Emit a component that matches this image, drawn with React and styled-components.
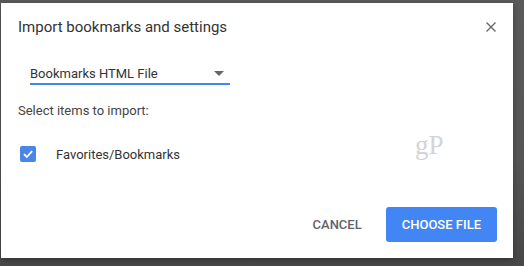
import React from 'react';
import styled, { createGlobalStyle } from 'styled-components';

const Global = createGlobalStyle`
  html, body {
    margin: 0;
    padding: 0;
    background: #4d4d4d;
    font-family: Roboto, "Liberation Sans", Arial, sans-serif;
  }
`;

const Backdrop = styled.div`
  width: 524px;
  height: 266px;
  padding: 3px 0 0 1px;
  box-sizing: border-box;
  background: linear-gradient(to bottom, #5a5a5a 0%, #555 60%, #474747 100%);
  overflow: hidden;
`;

const Dialog = styled.div`
  width: 512px;
  height: 255px;
  background: #fff;
  box-sizing: border-box;
  padding: 12px 0 0 17px;
  display: flex;
  flex-direction: column;
  position: relative;
  box-shadow: 0 2px 6px rgba(0, 0, 0, 0.3);
`;

const Header = styled.div`
  display: flex;
  align-items: center;
  justify-content: space-between;
  height: 24px;
  padding-right: 16px;
`;

const Title = styled.h1`
  margin: 0;
  font-size: 15px;
  font-weight: 400;
  color: #333;
`;

const Close = styled.button`
  border: 0;
  background: none;
  padding: 0;
  width: 12px;
  height: 12px;
  display: flex;
  cursor: pointer;
`;

const Select = styled.div`
  margin: 25px 0 0 12px;
  width: 200px;
  height: 19px;
  border-bottom: 2px solid #4285f4;
  display: flex;
  align-items: center;
  justify-content: space-between;
  font-size: 13px;
  color: #333;
  box-sizing: content-box;
`;

const Arrow = styled.span`
  width: 0;
  height: 0;
  margin-right: 6px;
  border-left: 5px solid transparent;
  border-right: 5px solid transparent;
  border-top: 5px solid #666;
`;

const Label = styled.div`
  margin-top: 18px;
  font-size: 13px;
  color: #444;
`;

const CheckRow = styled.label`
  margin: 28px 0 0 2px;
  display: flex;
  align-items: center;
  gap: 20px;
  font-size: 13px;
  color: #333;
`;

const Box = styled.span`
  width: 16px;
  height: 16px;
  border-radius: 2px;
  background: #4a86e8;
  display: flex;
  align-items: center;
  justify-content: center;
`;

const Watermark = styled.span`
  position: absolute;
  left: 414px;
  top: 127px;
  font-family: "Liberation Serif", "DejaVu Serif", serif;
  font-size: 27px;
  color: #d4d4d4;
`;

const Footer = styled.div`
  margin-top: auto;
  margin-bottom: 16px;
  padding-right: 16px;
  display: flex;
  justify-content: flex-end;
  align-items: center;
  gap: 12px;
`;

const Button = styled.button`
  height: 35px;
  padding: 0 ${(p) => (p.$primary ? '16px' : '12px')};
  border: 0;
  border-radius: 3px;
  background: ${(p) => (p.$primary ? '#4285f4' : 'transparent')};
  color: ${(p) => (p.$primary ? '#fff' : '#5f6368')};
  font-family: Roboto, "Liberation Sans", Arial, sans-serif;
  font-size: 13px;
  font-weight: 500;
  text-transform: uppercase;
  cursor: pointer;
`;

export default function App() {
  return (
    <>
      <Global />
      <Backdrop>
        <Dialog>
          <Header>
            <Title>Import bookmarks and settings</Title>
            <Close aria-label="Close">
              <svg width="12" height="12" viewBox="0 0 12 12">
                <path d="M1.5 1.5 L10.5 10.5 M10.5 1.5 L1.5 10.5" stroke="#666" strokeWidth="1.4" />
              </svg>
            </Close>
          </Header>
          <Select>
            <span>Bookmarks HTML File</span>
            <Arrow />
          </Select>
          <Label>Select items to import:</Label>
          <CheckRow>
            <Box>
              <svg width="12" height="12" viewBox="0 0 12 12">
                <path d="M2 6.2 L4.8 9 L10.2 3.2" stroke="#fff" strokeWidth="1.8" fill="none" />
              </svg>
            </Box>
            Favorites/Bookmarks
          </CheckRow>
          <Watermark>gP</Watermark>
          <Footer>
            <Button>Cancel</Button>
            <Button $primary>Choose file</Button>
          </Footer>
        </Dialog>
      </Backdrop>
    </>
  );
}
